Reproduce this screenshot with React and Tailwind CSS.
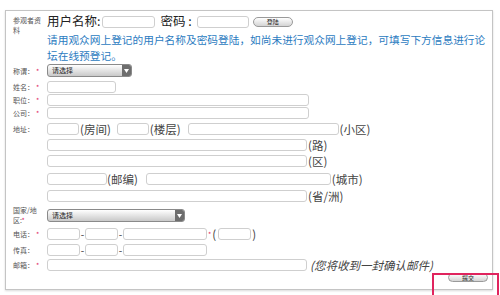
import React from 'react';

const font = { fontFamily: '"Noto Sans CJK SC", "Liberation Sans", sans-serif' };

const Field = ({ className = '' }) => (
    <div className={`h-[12px] shrink-0 rounded-[3px] border border-[#cfcfcf] bg-white ${className}`} />
);

const Note = ({ children, className = '' }) => (
    <span className={`shrink-0 text-[11.5px] leading-[12px] text-[#444] ${className}`}>{children}</span>
);

const Label = ({ text, required, className = '' }) => (
    <div className={`w-[34px] shrink-0 text-[7px] leading-[10px] text-[#555] ${className}`}>
        {text}
        {required && <span className="ml-[2px] text-[#e0245e]">*</span>}
    </div>
);

const Select = ({ width }) => (
    <div
        className={`flex h-[13px] ${width} items-center justify-between rounded-[3px] border border-[#8a8a8a] bg-gradient-to-b from-white to-[#c9c9c9]`}
    >
        <span className="pl-[4px] text-[7px] leading-none text-[#222]">请选择</span>
        <span className="flex h-full w-[9px] items-center justify-center rounded-r-[2px] bg-[#6d6d6d]">
            <svg width="5" height="4" viewBox="0 0 5 4">
                <path d="M0 0 L5 0 L2.5 4 Z" fill="#fff" />
            </svg>
        </span>
    </div>
);

const Button = ({ text, className = '' }) => (
    <div
        className={`flex items-center justify-center rounded-[5px] border border-[#9a9a9a] bg-gradient-to-b from-white to-[#d4d4d4] text-[6px] leading-none text-[#222] ${className}`}
    >
        {text}
    </div>
);

const Row = ({ label, required, className = '', children }) => (
    <div className={`flex h-[12px] items-center ${className}`}>
        <Label text={label} required={required} />
        {children}
    </div>
);

const Dash = () => <span className="w-[5px] text-center text-[10px] leading-none text-[#333]">-</span>;

const App = () => {
    return (
        <div className="relative h-[295px] w-[500px] bg-white" style={font}>
            <div className="ml-[5px] mt-[10px] flex h-[280px] w-[488px] flex-col border border-[#c4c4c4] pl-[7px] shadow-[0_1px_2px_rgba(0,0,0,0.15)]">
                <div className="mt-[3px] flex h-[15px] shrink-0 items-start">
                    <Label text="参观者资料" className="pt-[1px]" />
                    <div className="flex h-[15px] items-center">
                        <span className="text-[12.5px] leading-none text-[#222]">用户名称:</span>
                        <Field className="ml-[2px] w-[53px]" />
                        <span className="ml-[5px] text-[12.5px] leading-none text-[#222]">密码 :</span>
                        <Field className="ml-[5px] w-[52px]" />
                        <Button text="登陆" className="ml-[4px] h-[10px] w-[40px]" />
                    </div>
                </div>
                <div className="ml-[34px] mt-[3px] shrink-0 text-[10.7px] leading-[16px] text-[#2b7bbf]">
                    请用观众网上登记的用户名称及密码登陆，如尚未进行观众网上登记，可填写下方信息进行论
                    <br />
                    坛在线预登记。
                </div>

                <div className="flex h-[13px] shrink-0 items-center">
                    <Label text="称谓：" required />
                    <Select width="w-[85px]" />
                </div>
                <Row label="姓名：" required className="mt-[4px]">
                    <Field className="w-[69px]" />
                </Row>
                <Row label="职位：" required className="mt-[1px]">
                    <Field className="w-[262px]" />
                </Row>
                <Row label="公司：" required className="mt-[1px]">
                    <Field className="w-[262px]" />
                </Row>
                <Row label="地址：" className="mt-[4px]">
                    <Field className="w-[32px]" />
                    <Note className="ml-[1px]">(房间)</Note>
                    <Field className="ml-[6px] w-[32px]" />
                    <Note className="ml-[1px]">(楼层)</Note>
                    <Field className="ml-[7px] w-[151px]" />
                    <Note className="ml-[1px]">(小区)</Note>
                </Row>
                <Row className="mt-[4px]">
                    <Field className="w-[260px]" />
                    <Note className="ml-[1px]">(路)</Note>
                </Row>
                <Row className="mt-[4px]">
                    <Field className="w-[260px]" />
                    <Note className="ml-[1px]">(区)</Note>
                </Row>
                <Row className="mt-[6px]">
                    <Field className="w-[60px]" />
                    <Note>(邮编)</Note>
                    <Field className="ml-[8px] w-[185px]" />
                    <Note className="ml-[1px]">(城市)</Note>
                </Row>
                <Row className="mt-[5px]">
                    <Field className="w-[260px]" />
                    <Note className="ml-[1px]">(省/洲)</Note>
                </Row>

                <div className="mt-[7px] flex h-[13px] shrink-0">
                    <div className="-mt-[4px] w-[34px] shrink-0 text-[7px] leading-[10px] text-[#555]">
                        <div>国家/地</div>
                        <div>
                            区:<span className="text-[#e0245e]">*</span>
                        </div>
                    </div>
                    <Select width="w-[138px]" />
                </div>
                <Row label="电话：" required className="mt-[6px]">
                    <Field className="w-[33px]" />
                    <Dash />
                    <Field className="w-[33px]" />
                    <Dash />
                    <Field className="w-[84px]" />
                    <span className="ml-[1px] text-[7px] leading-none text-[#e0245e]">*</span>
                    <Note className="ml-[1px]">(</Note>
                    <Field className="ml-[2px] w-[33px]" />
                    <Note className="ml-[1px]">)</Note>
                </Row>
                <Row label="传真：" className="mt-[4px]">
                    <Field className="w-[33px]" />
                    <Dash />
                    <Field className="w-[33px]" />
                    <Dash />
                    <Field className="w-[84px]" />
                </Row>
                <Row label="邮箱：" required className="mt-[3px]">
                    <Field className="w-[260px]" />
                    <Note className="ml-[3px] italic">(您将收到一封确认邮件)</Note>
                </Row>
                <div className="mt-auto flex justify-end pb-[7px] pr-[4px]">
                    <Button text="提交" className="h-[9px] w-[40px]" />
                </div>
            </div>
            <div className="absolute left-[432px] top-[263px] h-[28px] w-[67px] border-2 border-[#e0245e]" />
        </div>
    );
};

export default App;
